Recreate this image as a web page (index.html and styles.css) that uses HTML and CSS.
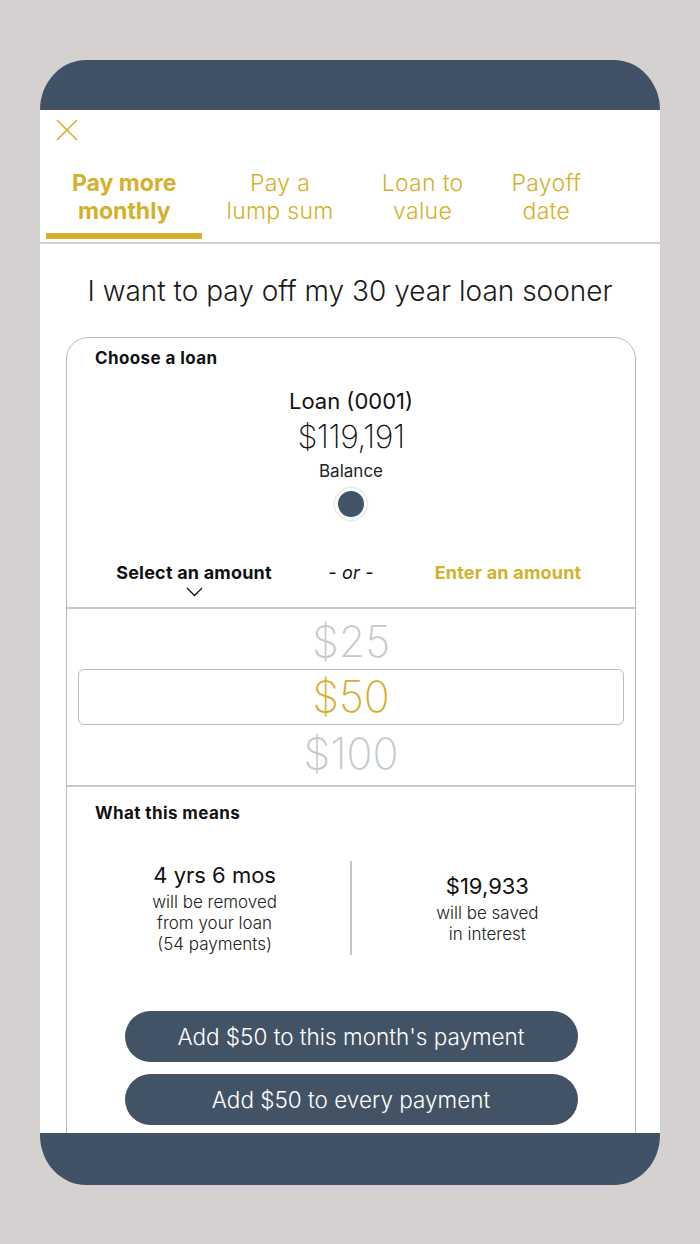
FILE: index.html
```html
<!DOCTYPE html>
<html lang="en">
<head>
  <meta charset="UTF-8" />
  <meta name="viewport" content="width=device-width, initial-scale=1.0" />
  <title>Pay off sooner</title>
  <link rel="stylesheet" href="styles.css">
</head>
<body>
  <div class="phone">
    <div class="topbar"></div>

    <div class="screen">
      <button class="close" aria-label="Close">
        <svg width="22" height="22" viewBox="0 0 22 22">
          <path d="M1 1 L21 21 M21 1 L1 21" stroke="#d4b02c" stroke-width="1.6" fill="none" />
        </svg>
      </button>

      <div class="tabs">
        <div class="tab active">Pay more<br>monthly</div>
        <div class="tab">Pay a<br>lump sum</div>
        <div class="tab">Loan to<br>value</div>
        <div class="tab">Payoff<br>date</div>
      </div>

      <h1 class="heading">I want to pay off my 30 year loan sooner</h1>

      <div class="card">
        <div class="label">Choose a loan</div>
        <div class="loan">
          <div class="loan-name">Loan (0001)</div>
          <div class="loan-amount">$119,191</div>
          <div class="loan-caption">Balance</div>
          <div class="dot"></div>
        </div>

        <div class="modes">
          <div class="mode selected">
            Select an amount
            <svg class="chevron" width="17" height="10" viewBox="0 0 17 10">
              <path d="M1 1 L8.5 8.5 L16 1" stroke="#111" stroke-width="1.3" fill="none" />
            </svg>
          </div>
          <div class="mode or">- or -</div>
          <div class="mode link">Enter an amount</div>
        </div>

        <div class="picker">
          <div class="option">$25</div>
          <div class="option current">$50</div>
          <div class="option">$100</div>
        </div>

        <div class="means">
          <div class="label">What this means</div>
          <div class="stats">
            <div class="stat">
              <div class="stat-value">4 yrs 6 mos</div>
              <div class="stat-text">will be removed<br>from your loan<br>(54 payments)</div>
            </div>
            <div class="divider"></div>
            <div class="stat">
              <div class="stat-value">$19,933</div>
              <div class="stat-text">will be saved<br>in interest</div>
            </div>
          </div>
        </div>

        <div class="actions">
          <button class="btn">Add $50 to this month's payment</button>
          <button class="btn">Add $50 to every payment</button>
        </div>
      </div>
    </div>

    <div class="bottombar"></div>
  </div>
</body>
</html>
```

FILE: styles.css
```css
body {
  margin: 0;
  background: #d5d1d1;
  font-family: Inter, "Liberation Sans", sans-serif;
  color: #111;
}
.phone {
  width: 620px;
  height: 1125px;
  margin: 60px 0 0 40px;
  display: flex;
  flex-direction: column;
  border-radius: 46px / 50px;
  overflow: hidden;
}
.topbar {
  height: 50px;
  background: #425266;
  flex-shrink: 0;
}
.bottombar {
  height: 52px;
  background: #425266;
  flex-shrink: 0;
}
.screen {
  flex: 1;
  background: #fff;
  overflow: hidden;
  display: flex;
  flex-direction: column;
}
.close {
  margin: 9px 0 0 16px;
  padding: 0;
  width: 22px;
  height: 22px;
  border: none;
  background: none;
  display: block;
}
.close svg {
  display: block;
}
.tabs {
  display: flex;
  margin-top: 28px;
  padding: 0 0 3px 6px;
  border-bottom: 2px solid #cfcfcf;
}
.tab {
  padding: 0 24px 8px;
  font-size: 23px;
  line-height: 28px;
  letter-spacing: 0.3px;
  font-weight: 300;
  color: #d4b02c;
  text-align: center;
  border-bottom: 6px solid transparent;
}
.tab.active {
  padding: 0 26px 8px;
  font-weight: 700;
  letter-spacing: 0;
  border-bottom-color: #d4b02c;
}
.heading {
  margin: 29px 0 0;
  font-size: 28px;
  line-height: 36px;
  font-weight: 300;
  text-align: center;
  color: #1a1a1a;
}
.card {
  margin: 28px 24px 0 26px;
  border: 1.5px solid #bcbcbc;
  border-radius: 22px;
  min-height: 900px;
}
.label {
  padding: 10px 0 0 28px;
  font-size: 17px;
  line-height: 21px;
  letter-spacing: 0.4px;
  font-weight: 700;
}
.loan {
  display: flex;
  flex-direction: column;
  align-items: center;
  margin-top: 18px;
}
.loan-name {
  font-size: 22px;
  line-height: 28px;
}
.loan-amount {
  margin-top: 3px;
  font-size: 32px;
  line-height: 38px;
  font-weight: 200;
  letter-spacing: -0.5px;
}
.loan-caption {
  margin-top: 5px;
  font-size: 17px;
  line-height: 20px;
  color: #222;
}
.dot {
  margin-top: 7px;
  width: 26px;
  height: 26px;
  border-radius: 50%;
  background: #435366;
  border: 3px solid #fff;
  box-shadow: 0 0 0 1.5px #ececec;
}
.modes {
  display: grid;
  grid-template-columns: 200px 114px 200px;
  justify-content: center;
  margin-top: 42px;
  padding-bottom: 10px;
  border-bottom: 2px solid #c9c9c9;
}
.mode {
  display: flex;
  flex-direction: column;
  align-items: center;
  font-size: 18px;
  line-height: 22px;
  letter-spacing: 0.2px;
  font-weight: 700;
}
.chevron {
  margin-top: 3px;
}
.or {
  font-weight: 400;
  font-style: italic;
}
.link {
  color: #d4b02c;
}
.picker {
  padding: 4px 11px 4px;
  border-bottom: 2px solid #c9c9c9;
}
.option {
  height: 56px;
  font-size: 43px;
  line-height: 56px;
  font-weight: 200;
  text-align: center;
  color: #c3c9cd;
  box-sizing: border-box;
}
.current {
  color: #d4b02c;
  border: 1.5px solid #bdbdbd;
  border-radius: 6px;
  line-height: 53px;
}
.means .label {
  padding-top: 16px;
}
.stats {
  display: grid;
  grid-template-columns: 1fr 1.5px 1fr;
  align-items: center;
  margin-top: 37px;
  padding: 0 12px;
}
.divider {
  height: 94px;
  background: #c4c4c4;
}
.stat {
  text-align: center;
}
.stat-value {
  font-size: 22px;
  line-height: 28px;
}
.stat-text {
  margin-top: 3px;
  font-size: 17px;
  line-height: 21px;
  font-weight: 300;
  color: #222;
}
.actions {
  display: flex;
  flex-direction: column;
  align-items: center;
  gap: 12px;
  margin-top: 56px;
}
.btn {
  width: 453px;
  height: 51px;
  border: none;
  border-radius: 26px;
  background: #435366;
  color: #fff;
  font-family: inherit;
  font-size: 22.5px;
  font-weight: 300;
}
```
